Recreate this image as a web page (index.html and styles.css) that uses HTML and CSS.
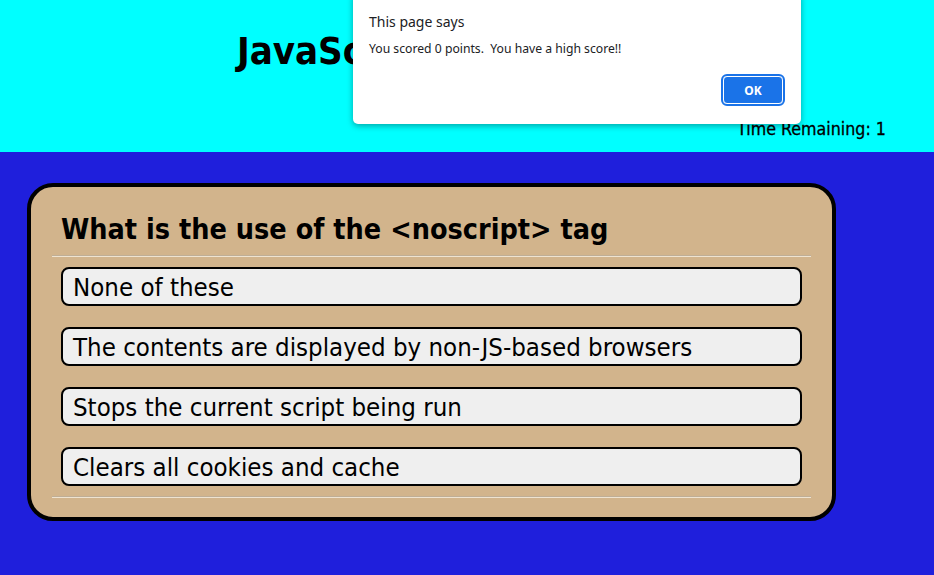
FILE: index.html
```html
<!DOCTYPE html>
<html>
<head>
<meta charset="utf-8">
<title>JavaScript Quiz</title>
<link rel="stylesheet" href="styles.css">
</head>
<body>
<header class="top">
  <h1 class="title">JavaScript Quiz</h1>
  <div class="timer">Time Remaining: 1</div>
</header>
<main class="main">
  <section class="card">
    <h2 class="question">What is the use of the &lt;noscript&gt; tag</h2>
    <hr class="rule">
    <div class="options">
      <button class="option">None of these</button>
      <button class="option">The contents are displayed by non-JS-based browsers</button>
      <button class="option">Stops the current script being run</button>
      <button class="option">Clears all cookies and cache</button>
    </div>
    <hr class="rule">
  </section>
</main>
<div class="dialog">
  <div class="dialog-title">This page says</div>
  <div class="dialog-msg">You scored 0 points.  You have a high score!!</div>
  <div class="dialog-actions"><button class="ok">OK</button></div>
</div>
</body>
</html>
```
FILE: styles.css
```css
html, body {
  margin: 0;
  padding: 0;
}
body {
  background: #1f1fdc;
  font-family: "DejaVu Sans Condensed", "DejaVu Sans", sans-serif;
  font-stretch: condensed;
  height: 575px;
  overflow: hidden;
  position: relative;
}
.top {
  background: #00ffff;
  height: 152px;
  box-sizing: border-box;
  display: flex;
  flex-direction: column;
  padding: 28px 48px 0 237px;
}
.title {
  margin: 0;
  font-size: 38px;
  font-weight: bold;
  line-height: 46px;
  color: #000;
}
.timer {
  align-self: flex-end;
  margin-top: 45px;
  font-size: 17.7px;
  line-height: 20px;
  color: #000;
  -webkit-text-stroke: 0.3px #000;
}
.main {
  padding: 31px 0 0 27px;
}
.card {
  width: 809px;
  height: 338px;
  box-sizing: border-box;
  background: #d2b48c;
  border: 4px solid #000;
  border-radius: 26px;
  padding: 18px 21px 0 21px;
}
.question {
  margin: 0 0 0 9px;
  font-size: 28.5px;
  line-height: 50px;
  font-weight: bold;
  color: #000;
}
.rule {
  margin: 0;
  border: 0;
  border-top: 1px solid #bfae96;
  border-bottom: 1px solid #efe3d0;
}
.options {
  display: flex;
  flex-direction: column;
  gap: 21px;
  padding: 10px 9px 10px 9px;
}
.option {
  display: block;
  width: 741px;
  height: 39px;
  box-sizing: border-box;
  background: #efefef;
  border: 2px solid #000;
  border-radius: 8px;
  padding: 0 10px;
  text-align: left;
  font-family: "DejaVu Sans Condensed", "DejaVu Sans", sans-serif;
  font-stretch: condensed;
  font-size: 25.6px;
  line-height: 34px;
  color: #000;
}
.dialog {
  position: absolute;
  left: 353px;
  top: -6px;
  width: 448px;
  height: 130px;
  box-sizing: border-box;
  background: #fff;
  border-radius: 0 0 5px 5px;
  box-shadow: 0 2px 6px rgba(0,0,0,0.35);
  padding: 18px 16px 0 16px;
  font-family: "Noto Sans", "Open Sans", sans-serif;
  color: #202124;
}
.dialog-title {
  font-size: 14px;
  line-height: 20px;
}
.dialog-msg {
  margin-top: 9px;
  font-size: 12.2px;
  line-height: 16px;
  white-space: pre;
}
.dialog-actions {
  display: flex;
  justify-content: flex-end;
  margin-top: 19px;
}
.ok {
  width: 60px;
  height: 28px;
  margin-right: 2px;
  background: #1a73e8;
  color: #fff;
  border: 1px solid #fff;
  outline: 2px solid #1a73e8;
  border-radius: 4px;
  font-family: "Noto Sans", "Open Sans", sans-serif;
  font-weight: bold;
  font-size: 12px;
  padding: 0;
}
```
